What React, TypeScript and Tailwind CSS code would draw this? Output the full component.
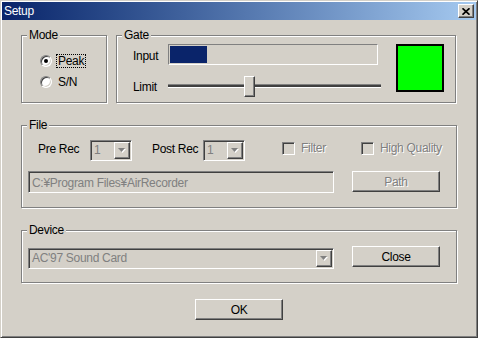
import type { ReactNode } from 'react'

const RAISED =
  'border border-t-white border-l-white border-b-[#404040] border-r-[#404040] bg-[#d4d0c8] shadow-[inset_-1px_-1px_0_#808080]'
const SUNKEN =
  'border border-t-[#808080] border-l-[#808080] border-b-white border-r-white shadow-[inset_1px_1px_0_#404040,inset_-1px_-1px_0_#d4d0c8]'
const GRAYED = 'text-[#808080] [text-shadow:1px_1px_0_#fff]'

function GroupBox({ label, className, children }: { label: string; className: string; children: ReactNode }) {
  return (
    <div className={`relative border border-[#808080] shadow-[inset_1px_1px_0_white,1px_1px_0_white] ${className}`}>
      <span className="absolute left-[5px] top-[-8px] bg-[#d4d0c8] px-[2px]">{label}</span>
      {children}
    </div>
  )
}

function Radio({ checked, label }: { checked: boolean; label: string }) {
  return (
    <div className="flex h-[14px] items-center">
      <div className="flex h-[12px] w-[12px] items-center justify-center rounded-full border border-t-[#808080] border-l-[#808080] border-b-white border-r-white bg-white shadow-[inset_1px_1px_0_#404040,inset_-1px_-1px_0_#d4d0c8]">
        {checked && <div className="h-[4px] w-[4px] rounded-full bg-black" />}
      </div>
      <span
        className={`ml-[4px] border px-px leading-[12px] ${checked ? 'border-dotted border-black' : 'border-transparent'}`}
      >
        {label}
      </span>
    </div>
  )
}

function DownArrow() {
  return (
    <svg width="8" height="5" viewBox="0 0 8 5" aria-hidden="true">
      <path d="M1 1h7l-3.5 4z" fill="#ffffff" />
      <path d="M0 0h7l-3.5 4z" fill="#808080" />
    </svg>
  )
}

function Combo({ text, className }: { text: string; className: string }) {
  return (
    <div className={`flex h-[21px] bg-[#d4d0c8] p-px ${SUNKEN} ${className}`}>
      <span className="flex-1 overflow-hidden whitespace-nowrap pl-[2px] pt-px text-[#808080]">{text}</span>
      <div className={`flex h-full w-[16px] items-center justify-center ${RAISED}`}>
        <DownArrow />
      </div>
    </div>
  )
}

function CheckItem({ label, className }: { label: string; className: string }) {
  return (
    <div className={`flex items-start ${className}`}>
      <div className={`mt-[2px] h-[13px] w-[13px] bg-[#d4d0c8] ${SUNKEN}`} />
      <span className={`ml-[6px] mt-px ${GRAYED}`}>{label}</span>
    </div>
  )
}

function PushButton({ label, disabled, className }: { label: string; disabled?: boolean; className: string }) {
  return (
    <button
      type="button"
      className={`flex h-[21px] w-[88px] items-center justify-center ${RAISED} ${disabled ? GRAYED : 'text-black'} ${className}`}
    >
      {label}
    </button>
  )
}

export default function App() {
  return (
    <div className="h-[338px] w-[478px] overflow-hidden border border-t-[#d4d0c8] border-l-[#d4d0c8] border-b-[#404040] border-r-[#404040] bg-[#d4d0c8] p-px font-['Liberation_Sans',Arial,sans-serif] text-[12px] leading-[14px] tracking-[-0.3px] text-black shadow-[inset_1px_1px_0_white,inset_-1px_-1px_0_#808080]">
      <div className="flex h-[18px] items-center justify-between bg-linear-to-r from-[#0a246a] to-[#a6caf0] px-[2px]">
        <span className="text-white">Setup</span>
        <button type="button" className={`flex h-[14px] w-[16px] items-center justify-center ${RAISED}`}>
          <svg width="8" height="7" viewBox="0 0 8 7" aria-hidden="true">
            <path d="M0.5 0.3L7.5 6.7M7.5 0.3L0.5 6.7" stroke="#000" strokeWidth="1.7" />
          </svg>
        </button>
      </div>

      <div className="pl-[19px] pt-[15px]">
        <div className="flex">
          <GroupBox label="Mode" className="h-[68px] w-[86px]">
            <div className="flex flex-col gap-[7px] pl-[18px] pt-[18px]">
              <Radio checked label="Peak" />
              <Radio checked={false} label="S/N" />
            </div>
          </GroupBox>

          <GroupBox label="Gate" className="ml-[9px] h-[68px] w-[340px]">
            <div className="flex pl-[16px] pt-[8px]">
              <div className="flex flex-col">
                <div className="flex">
                  <span className="mt-[5px] w-[35px]">Input</span>
                  <div className="h-[21px] w-[210px] border border-t-[#808080] border-l-[#808080] border-b-white border-r-white p-px">
                    <div className="h-full w-[37px] bg-[#0a246a]" />
                  </div>
                </div>
                <div className="mt-[11px] flex">
                  <span className="mt-[4px] w-[35px]">Limit</span>
                  <div className="relative h-[21px] w-[213px]">
                    <div className="mt-[8px] h-[4px] border-t border-b border-t-[#808080] border-b-white bg-[#404040]" />
                    <div className={`absolute left-[76px] top-0 h-[21px] w-[11px] ${RAISED}`} />
                  </div>
                </div>
              </div>
              <div className="ml-[15px] h-[48px] w-[48px] border-2 border-black bg-[#00ff00]" />
            </div>
          </GroupBox>
        </div>

        <GroupBox label="File" className="mt-[22px] h-[83px] w-[436px]">
          <div className="pl-[6px] pt-[14px]">
            <div className="ml-[10px] flex h-[21px] items-start">
              <span className="mt-[2px] w-[52px]">Pre Rec</span>
              <Combo text="1" className="w-[42px]" />
              <span className="ml-[20px] mt-[2px] w-[51px]">Post Rec</span>
              <Combo text="1" className="w-[42px]" />
              <CheckItem label="Filter" className="ml-[37px] w-[79px]" />
              <CheckItem label="High Quality" className="" />
            </div>
            <div className="mt-[10px] flex items-start">
              <div className={`h-[22px] w-[306px] bg-[#d4d0c8] p-px ${SUNKEN}`}>
                <span className="block pl-[2px] pt-[3px] text-[#808080]">C:¥Program Files¥AirRecorder</span>
              </div>
              <PushButton label="Path" disabled className="ml-[18px]" />
            </div>
          </div>
        </GroupBox>

        <GroupBox label="Device" className="mt-[22px] h-[53px] w-[436px]">
          <div className="flex items-start pl-[6px] pt-[15px]">
            <Combo text="AC'97 Sound Card" className="mt-[2px] w-[306px]" />
            <PushButton label="Close" className="ml-[18px]" />
          </div>
        </GroupBox>

        <PushButton label="OK" className="ml-[174px] mt-[16px]" />
      </div>
    </div>
  )
}
